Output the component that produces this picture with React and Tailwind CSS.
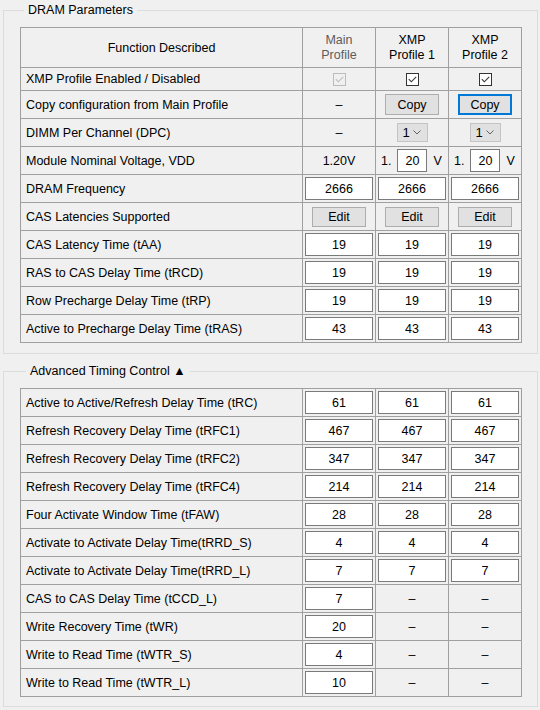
import React from 'react';

const font = { fontFamily: '"Liberation Sans", Arial, sans-serif' };

const Check = ({ disabled = false }) => (
  <span
    className={`flex h-[13px] w-[13px] items-center justify-center border ${
      disabled ? 'border-[#bcbcbc] bg-[#f0f0f0]' : 'border-[#333333] bg-white'
    }`}
  >
    <svg width="11" height="11" viewBox="0 0 11 11">
      <path
        d="M1.8 5.2 L4.3 7.8 L9.2 2.8"
        fill="none"
        stroke={disabled ? '#bcbcbc' : '#333333'}
        strokeWidth="1.1"
      />
    </svg>
  </span>
);

const Field = ({ value }) => (
  <div className="flex h-[23px] w-[68px] items-center justify-center border border-[#7a7a7a] bg-white">
    {value}
  </div>
);

const Button = ({ label, focused = false, h = 'h-[21px]' }) => (
  <div
    className={`flex ${h} w-[54px] items-center justify-center bg-[#e1e1e1] ${
      focused ? 'border-2 border-[#0078d7]' : 'border border-[#adadad]'
    }`}
  >
    {label}
  </div>
);

const Select = () => (
  <div className="flex h-[19px] w-[31px] items-center justify-between border border-[#c4c4c4] bg-[#e1e1e1] pl-[5px] pr-[6px]">
    <span className="text-[13px]">1</span>
    <svg width="8" height="5" viewBox="0 0 8 5">
      <path d="M0.5 0.5 L4 4 L7.5 0.5" fill="none" stroke="#606060" strokeWidth="1" />
    </svg>
  </div>
);

const Volt = () => (
  <div className="flex w-full items-center pl-[5px]">
    <span>1.</span>
    <div className="ml-[6px] flex h-[23px] w-[30px] items-center justify-center border border-[#7a7a7a] bg-white">
      20
    </div>
    <span className="ml-[6px]">V</span>
  </div>
);

const Dash = () => <span>–</span>;

const Row = ({ label, cells, h = 'h-[27px]' }) => (
  <>
    <div className={`${h} flex items-center bg-[#f0f0f0] pl-[5px]`}>{label}</div>
    {cells.map((c, i) => (
      <div key={i} className={`${h} flex items-center justify-center bg-[#f0f0f0]`}>
        {c}
      </div>
    ))}
  </>
);

const Grid = ({ children }) => (
  <div className="grid w-fit grid-cols-[281px_72px_72px_72px] gap-px border border-[#a0a0a0] bg-[#a0a0a0] text-[12.5px]">
    {children}
  </div>
);

const num = (v) => [<Field value={v} />, <Field value={v} />, <Field value={v} />];
const mainOnly = (v) => [<Field value={v} />, <Dash />, <Dash />];

const advanced = [
  ['Active to Active/Refresh Delay Time (tRC)', num('61')],
  ['Refresh Recovery Delay Time (tRFC1)', num('467')],
  ['Refresh Recovery Delay Time (tRFC2)', num('347')],
  ['Refresh Recovery Delay Time (tRFC4)', num('214')],
  ['Four Activate Window Time (tFAW)', num('28')],
  ['Activate to Activate Delay Time(tRRD_S)', num('4')],
  ['Activate to Activate Delay Time(tRRD_L)', num('7')],
  ['CAS to CAS Delay Time (tCCD_L)', mainOnly('7')],
  ['Write Recovery Time (tWR)', mainOnly('20')],
  ['Write to Read Time (tWTR_S)', mainOnly('4')],
  ['Write to Read Time (tWTR_L)', mainOnly('10')],
];

export default function App() {
  return (
    <div
      className="min-h-[710px] w-[540px] bg-[#f0f0f0] pt-[2px] text-[12px] leading-[16px] text-black"
      style={font}
    >
      {/* DRAM Parameters */}
      <fieldset className="ml-[3px] w-[535px] border border-[#dcdcdc] pb-[10px] pl-4 pr-[15px] pt-[9px]">
        <legend className="ml-1 px-1 text-[12.5px] leading-[16px]">DRAM Parameters</legend>
        <Grid>
          <div className="flex h-[39px] items-center justify-center bg-[#f0f0f0]">
            Function Described
          </div>
          <div className="flex h-[39px] items-center justify-center bg-[#f0f0f0] text-center leading-[15px] text-[#5c5c5c]">
            Main
            <br />
            Profile
          </div>
          <div className="flex h-[39px] items-center justify-center bg-[#f0f0f0] text-center leading-[15px]">
            XMP
            <br />
            Profile 1
          </div>
          <div className="flex h-[39px] items-center justify-center bg-[#f0f0f0] text-center leading-[15px]">
            XMP
            <br />
            Profile 2
          </div>
          <Row
            h="h-[22px]"
            label="XMP Profile Enabled / Disabled"
            cells={[<Check disabled />, <Check />, <Check />]}
          />
          <Row
            label="Copy configuration from Main Profile"
            cells={[<Dash />, <Button label="Copy" />, <Button label="Copy" focused />]}
          />
          <Row label="DIMM Per Channel (DPC)" cells={[<Dash />, <Select />, <Select />]} />
          <Row label="Module Nominal Voltage, VDD" cells={['1.20V', <Volt />, <Volt />]} />
          <Row label="DRAM Frequency" cells={num('2666')} />
          <Row
            label="CAS Latencies Supported"
            cells={[
              <Button label="Edit" h="h-[20px]" />,
              <Button label="Edit" h="h-[20px]" />,
              <Button label="Edit" h="h-[20px]" />,
            ]}
          />
          <Row label="CAS Latency Time (tAA)" cells={num('19')} />
          <Row label="RAS to CAS Delay Time (tRCD)" cells={num('19')} />
          <Row label="Row Precharge Delay Time (tRP)" cells={num('19')} />
          <Row label="Active to Precharge Delay Time (tRAS)" cells={num('43')} />
        </Grid>
      </fieldset>

      {/* Advanced Timing Control */}
      <fieldset className="ml-[3px] mt-[9px] w-[535px] border border-[#dcdcdc] pb-[9px] pl-4 pr-[15px] pt-[9px]">
        <legend className="ml-[6px] px-1 text-[12.5px] leading-[16px]">Advanced Timing Control ▲</legend>
        <Grid>
          {advanced.map(([label, cells]) => (
            <Row key={label} label={label} cells={cells} />
          ))}
        </Grid>
      </fieldset>
    </div>
  );
}
